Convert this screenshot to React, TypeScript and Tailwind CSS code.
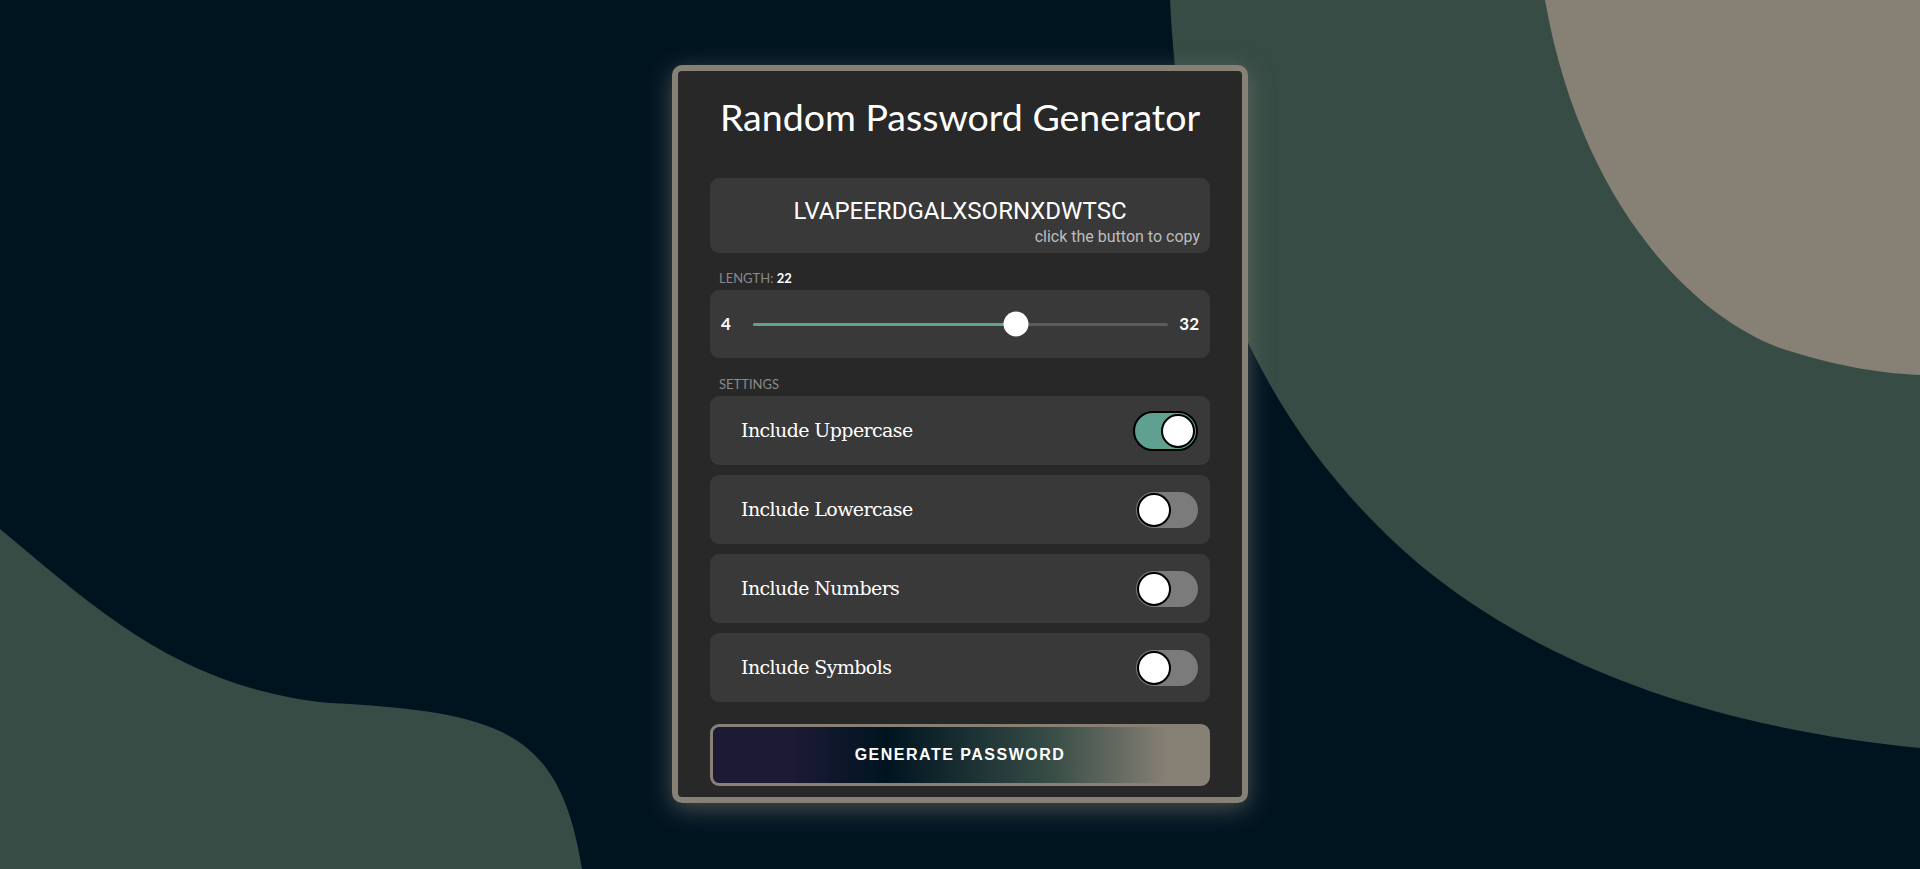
const toggles = [
  { label: "Include Uppercase", on: true },
  { label: "Include Lowercase", on: false },
  { label: "Include Numbers", on: false },
  { label: "Include Symbols", on: false },
];

function Toggle({ on }: { on: boolean }) {
  if (on) {
    return (
      <div className="relative h-[40px] w-[65px] shrink-0 rounded-full border-2 border-black bg-[#5fa090]">
        <div className="absolute right-[1px] top-[1px] h-[34px] w-[34px] rounded-full border-2 border-black bg-white" />
      </div>
    );
  }
  return (
    <div className="relative h-[36px] w-[62px] shrink-0 rounded-full bg-[#7b7b7b]">
      <div className="absolute left-[1px] top-[1px] h-[34px] w-[34px] rounded-full border-2 border-black bg-white" />
    </div>
  );
}

export default function App() {
  const length = 22;
  const ratio = (length - 4) / (32 - 4);

  return (
    <div className="relative h-[869px] w-full overflow-hidden bg-[#001420]">
      {/* background blobs */}
      <svg
        className="absolute inset-0 h-full w-full"
        viewBox="0 0 1920 869"
        preserveAspectRatio="none"
      >
        <path
          d="M1170 0 C1182 250 1262 430 1420 565 C1560 680 1740 730 1920 748 L1920 0 Z"
          fill="#364c45"
        />
        <path
          d="M1545 0 C1580 200 1690 315 1780 348 C1840 368 1890 374 1920 375 L1920 0 Z"
          fill="#878075"
        />
        <path
          d="M0 529 C100 612 180 688 330 703 C500 712 560 730 582 869 L0 869 Z"
          fill="#364c45"
        />
      </svg>

      <div className="relative flex justify-center pt-[65px]">
        <div className="flex w-[576px] flex-col rounded-[10px] border-[6px] border-[#878075] bg-[#282828] px-[32px] pb-[11px] pt-[24px] shadow-[0_6px_24px_rgba(135,128,117,0.55)]">
          <h1 className="text-center font-['Lato',sans-serif] text-[37.5px] leading-[44px] text-white">
            Random Password Generator
          </h1>

          <div className="mt-[39px] flex h-[75px] flex-col rounded-[9px] bg-[#393939] pt-[19px] font-['Roboto',sans-serif]">
            <div className="text-center text-[24px] leading-[28px] text-white">
              LVAPEERDGALXSORNXDWTSC
            </div>
            <div className="mt-[2px] pr-[10px] text-right text-[16px] leading-[19px] text-[#bdbdbd]">
              click the button to copy
            </div>
          </div>

          <div className="mt-[17px] mb-[4px] pl-[9px] font-['Lato',sans-serif] text-[13px] leading-[16px] text-[#8a8a8a]">
            LENGTH: <span className="font-bold text-white">{length}</span>
          </div>

          <div className="flex h-[68px] items-center rounded-[9px] bg-[#393939] px-[11px] font-['Lato',sans-serif] text-[17px] font-bold text-white">
            <span className="w-[32px]">4</span>
            <div className="relative h-[3px] flex-1 rounded-full bg-[#5c5c5c]">
              <div
                className="absolute left-0 top-0 h-full rounded-full bg-[#5fa38f]"
                style={{ width: `calc(${ratio} * (100% - 25px) + 12.5px)` }}
              />
              <div
                className="absolute top-1/2 h-[25px] w-[25px] -translate-x-1/2 -translate-y-1/2 rounded-full bg-white"
                style={{ left: `calc(${ratio} * (100% - 25px) + 12.5px)` }}
              />
            </div>
            <span className="ml-[11px]">32</span>
          </div>

          <div className="mt-[18px] mb-[4px] pl-[9px] font-['Lato',sans-serif] text-[13px] leading-[16px] text-[#8a8a8a]">
            SETTINGS
          </div>

          <div className="flex flex-col gap-[10px]">
            {toggles.map((t) => (
              <div
                key={t.label}
                className="flex h-[69px] items-center justify-between rounded-[9px] bg-[#393939] pl-[31px] pr-[12px]"
              >
                <span className="font-['DejaVu_Serif',serif] text-[19px] tracking-[-0.6px] text-white">
                  {t.label}
                </span>
                <Toggle on={t.on} />
              </div>
            ))}
          </div>

          <button className="mt-[22px] h-[62px] rounded-[9px] border-[3px] border-[#878075] bg-[linear-gradient(90deg,#1c1a35_16%,#001420_35%,#364c45_68%,#878075_92%)] font-['Liberation_Sans',sans-serif] text-[16px] font-bold tracking-[1.5px] text-white">
            GENERATE PASSWORD
          </button>
        </div>
      </div>
    </div>
  );
}
